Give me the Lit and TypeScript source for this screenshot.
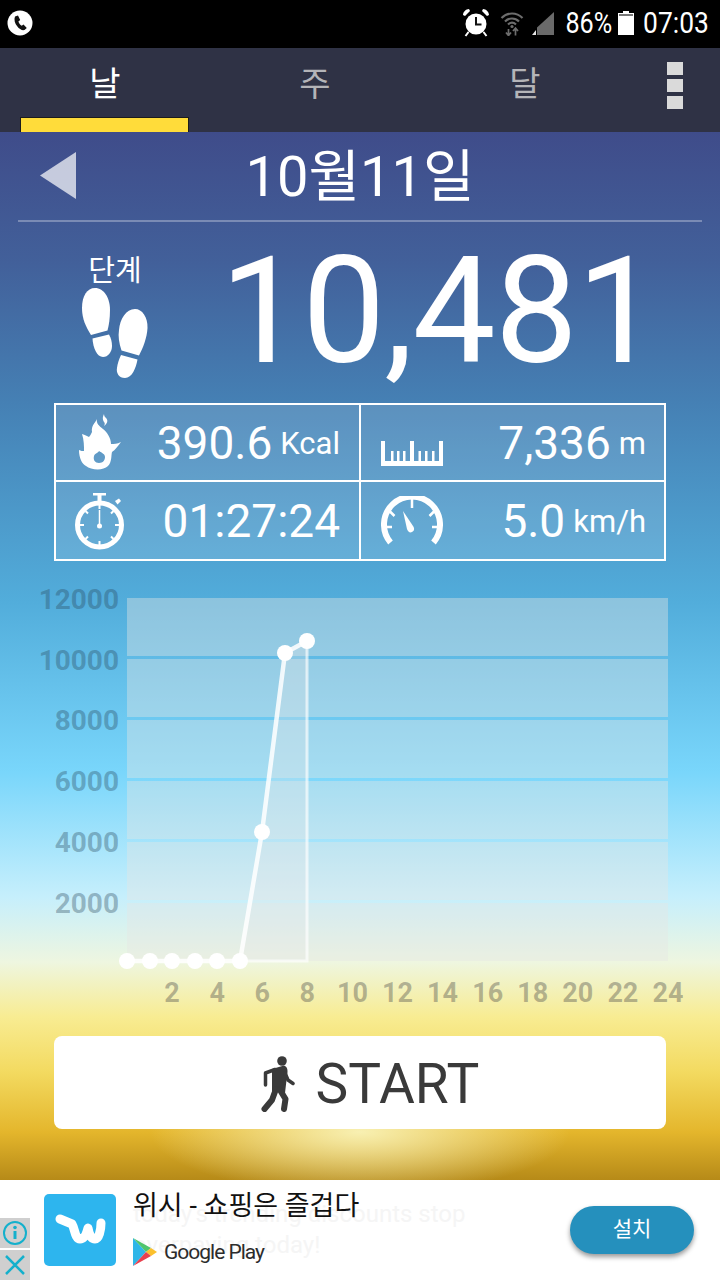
import { html, css, LitElement, svg } from 'lit'
import { customElement, state } from 'lit/decorators.js'

const YLABELS = [
  { text: '12000', y: 599 },
  { text: '10000', y: 660 },
  { text: '8000', y: 720 },
  { text: '6000', y: 781 },
  { text: '4000', y: 842 },
  { text: '2000', y: 903 },
]

// bands of the plot, the gaps between them are the grid lines
const BANDS = [
  [598, 656],
  [659, 717],
  [720, 778],
  [781, 839],
  [842, 900],
  [903, 961],
]

const POINTS = [
  [127, 961],
  [150, 961],
  [172, 961],
  [195, 961],
  [217, 961],
  [240, 961],
  [262, 832],
  [285, 653],
  [307, 641],
]

@customElement('app-root')
export class AppRoot extends LitElement {
  @state()
  steps = '10,481'

  private chart() {
    const line = POINTS.map((p) => p.join(',')).join(' ')
    return html`
      <svg class="chart" viewBox="0 561 720 475" width="720" height="475">
        ${BANDS.map(
          ([a, b]) => svg`<rect x="127" y=${a} width="541" height=${b - a} fill="rgb(230,230,227)" fill-opacity="0.4"></rect>`,
        )}
        ${YLABELS.map(
          (l) => svg`<text class="axis ylab" x="119" y=${l.y + 10}>${l.text}</text>`,
        )}
        ${[2, 4, 6, 8, 10, 12, 14, 16, 18, 20, 22, 24].map(
          (h) => svg`<text class="axis xlab" x=${127 + h * 22.54} y="1002">${h}</text>`,
        )}
        <polygon points="240,961 262,832 285,653 307,641 307,961" fill="#e8e8e8" fill-opacity="0.3"></polygon>
        <polyline points="240,961 307,961 307,641" fill="none" stroke="#fff" stroke-opacity="0.65" stroke-width="3"></polyline>
        <polyline points=${line} fill="none" stroke="#fff" stroke-opacity="0.85" stroke-width="4.5"></polyline>
        ${POINTS.map((p) => svg`<circle cx=${p[0]} cy=${p[1]} r="8" fill="#fff"></circle>`)}
      </svg>
    `
  }

  render() {
    return html`
      <div class="status">
        <svg class="ph" width="26" height="26" viewBox="0 0 26 26">
          <circle cx="13" cy="13" r="12.5" fill="#fff"></circle>
          <path d="M8 6.5l3-1 2.2 4.4-1.8 1.5c.6 1.8 1.7 3.300 3.300 4.400l1.800-1.300 3.300 3.500-2.300 2c-2.500.6-5.200-1-7.300-3.800C7.800 13.300 6.800 9.500 8 6.500z" fill="#111"></path>
        </svg>
        <span class="status-right">
          <svg width="28" height="30" viewBox="0 0 28 30">
            <path d="M1 7c0-3 3-6 6-6l1 2-5 5zM27 7c0-3-3-6-6-6l-1 2 5 5z" fill="#fff"></path>
            <circle cx="14" cy="16" r="10.500" fill="#fff"></circle>
            <path d="M14 9v7.500h5.500" fill="none" stroke="#111" stroke-width="2"></path>
            <path d="M6.500 24l-3 4M21.500 24l3 4" stroke="#fff" stroke-width="2"></path>
          </svg>
          <svg class="wifi" width="24" height="26" viewBox="0 0 24 26">
            <path d="M1.500 8c6-6 15-6 21 0M5 11.500c4-4 10-4 14 0M8 14.500c2.400-2.200 5.600-2.200 8 0" fill="none" stroke="#6d6d6d" stroke-width="2.200"></path>
            <circle cx="12" cy="16.500" r="1.600" fill="#6d6d6d"></circle>
            <path d="M8.500 19v6.500M6 22.500l2.500 3 2.500-3M15.500 25.500V18M13 21l2.500-3 2.500 3" fill="none" stroke="#6d6d6d" stroke-width="1.700"></path>
          </svg>
          <svg class="sig" width="24" height="24" viewBox="0 0 24 24">
            <path d="M6 16.500L23 1v23H6z" fill="#6a6a6a"></path>
            <path d="M1 24l4-5v5z" fill="#e6e6e6"></path>
          </svg>
          <span class="pct">86%</span>
          <svg class="bat" width="16" height="24" viewBox="0 0 16 24">
            <path d="M5 0h6v2h5v22H0V2h5z" fill="#fff"></path>
            <path d="M1 3h14v2H1z" fill="#777"></path>
          </svg>
          <span class="clock">07:03</span>
        </span>
      </div>

      <div class="tabs">
        <div class="tab on">날<i></i></div>
        <div class="tab">주</div>
        <div class="tab">달</div>
        <div class="dots"><b></b><b></b><b></b></div>
      </div>

      <main>
        <div class="head">
          <svg class="back" width="36" height="47" viewBox="0 0 36 47"><path d="M36 0v47L0 23.500z" fill="#fff" fill-opacity="0.7"></path></svg>
          <span class="title">10월11일</span>
        </div>

        <div class="steps">
          <div class="steps-left">
            <span class="label">단계</span>
            <svg width="66" height="90" viewBox="0 0 66 90" fill="#fff">
              <path d="M13 0C22 0 28 10 28 22 28 30 27 37 25.500 42.500L9 47C4 39 0 31 0 20 0 8 5 0 13 0Z"></path>
              <path d="M10.500 50.500L27 46.500C29 50 30 54 30 58 30 64 26 69 21 69 15 69 11 60 10.500 50.500Z"></path>
              <path d="M53 21C60 21 66 29 65.500 40 65 50 61 60 57 67.500L39.500 62.500C37 55 36 48 37 42 38 31 44 21 53 21Z"></path>
              <path d="M39 67L55.500 71.500C54 80 50 90 43 90 37 90 34 85 35 80 35.500 76 37 71 39 67Z"></path>
            </svg>
          </div>
          <span class="count">${this.steps}</span>
        </div>

        <div class="stats">
          <div class="cell top left">
            <span class="ico"><svg width="42" height="57" viewBox="0 0 42 57" fill="#fff">
              <path d="M25 0C23 4 24 6 25 8 26 9 26 10 25 12 29 9 29 6 27 4 26 3 25 2 25 0Z"></path>
              <path fill-rule="evenodd" d="M18 5C16 9 12 12 13 18 12 20 11 22 10 23 8 22 6 21 3 20 5 26 5 32 5 37 3 37 2 37 0 36 0 44 3 50 7 52 12 56 24 57 29 52 33 48 32 42 33 38 36 36 39 32 42 28 38 30 35 30 32 30 32 24 28 18 24 15 20 12 17 9 18 5ZM20 37c-1 2-4 2-5 5-1 4 1 7 5 7 4 0 6-3 6-6 0-3-3-4-6-6z"></path>
            </svg></span>
            <span class="val">390.6<small>Kcal</small></span>
          </div>
          <div class="cell top">
            <span class="ico wide low"><svg width="62" height="25" viewBox="0 0 62 25" fill="#fff">
              <path d="M0 0h4v20h6V10h2.500v10H16V10h2.500v10H22V10h2.500v10H29V0h4v20h4.500V10H40v10h4V10h2.500v10H51V10h2.500v10H58V0h4v25H0z"></path>
            </svg></span>
            <span class="val">7,336<small>m</small></span>
          </div>
          <div class="cell left">
            <span class="ico"><svg width="50" height="58" viewBox="0 0 50 58">
              <path d="M18 1h13v2.500h-4.500V9h-4V3.500H18z" fill="#fff"></path>
              <path d="M40 9l4-2.500 2 2.500-3.500 3.500z" fill="#fff"></path>
              <circle cx="24.500" cy="33" r="22" fill="none" stroke="#fff" stroke-width="5"></circle>
              <path d="M24.500 13v4M24.500 49v4M5 33h4M40 33h4M10.500 19l2.500 2.500M38.500 19L36 21.500M10.500 47l2.500-2.500M38.500 47L36 44.500" stroke="#fff" stroke-width="2"></path>
              <path d="M24.500 18v15" stroke="#fff" stroke-width="1.500"></path>
              <circle cx="24.500" cy="34" r="2.500" fill="#fff"></circle>
            </svg></span>
            <span class="val">01:27:24</span>
          </div>
          <div class="cell">
            <span class="ico wide"><svg width="62" height="50" viewBox="0 0 62 50">
              <path d="M9.500 46.500A28 28 0 1 1 52.500 46.500" fill="none" stroke="#fff" stroke-width="6"></path>
              <path d="M31 3v9M8.500 15l5 5M53.500 15l-5 5M3 31h8M51 31h8" stroke="#fff" stroke-width="2.500"></path>
              <path d="M22 15l10 15c2 3 1 5-1 6-2 1-4 0-5-3z" fill="#fff"></path>
            </svg></span>
            <span class="val">5.0<small>km/h</small></span>
          </div>
        </div>

        ${this.chart()}

        <button class="start">
          <svg width="34" height="56" viewBox="0 0 34 56">
            <circle cx="21" cy="5" r="4.800" fill="#3a3a3a"></circle>
            <path d="M11 13L23 9.500C27 11 27 15 26 20L24 37 11 35Z" fill="#3a3a3a"></path>
            <g fill="none" stroke="#3a3a3a" stroke-linecap="round" stroke-linejoin="round">
              <path d="M14 13.500L4.500 17V29" stroke-width="3.500"></path>
              <path d="M24 17L27 24 32 27.500" stroke-width="3.500"></path>
              <path d="M15 33L11 44 3.500 53" stroke-width="6"></path>
              <path d="M19 34L24.500 43 23 53" stroke-width="6"></path>
            </g>
          </svg>
          <span>START</span>
        </button>
      </main>

      <div class="ad">
        <span class="ghost g1">today's trending discounts stop</span>
        <span class="ghost g2">overpaying today!</span>
        <svg class="wish" width="72" height="72" viewBox="0 0 72 72">
          <rect width="72" height="72" rx="5" fill="#2db5ee"></rect>
          <path d="M16 25l12 5c3 5 3 15 8 15 5 0 7-7 8-11 1 6 3 11 7 11 4 0 6-9 6-16" fill="none" stroke="#fff" stroke-width="9" stroke-linecap="round" stroke-linejoin="round"></path>
        </svg>
        <div class="ad-text">
          <span class="ad-title">위시 - 쇼핑은 즐겁다</span>
          <span class="gp">
            <svg width="24" height="28" viewBox="0 0 24 28">
              <path d="M0 0l13 14L0 28z" fill="#2fb6e8"></path>
              <path d="M0 0l18 10-5 4z" fill="#4fc46c"></path>
              <path d="M18 10l6 4-6 4-5-4z" fill="#fbc02d"></path>
              <path d="M0 28l18-10-5-4z" fill="#e8404f"></path>
            </svg>
            <span>Google Play</span>
          </span>
        </div>
        <span class="install">설치</span>
        <div class="ad-side">
          <span><svg width="26" height="26" viewBox="0 0 26 26">
            <circle cx="13" cy="13" r="11" fill="none" stroke="#14b0cc" stroke-width="2"></circle>
            <path d="M13 11v8" stroke="#14b0cc" stroke-width="3"></path>
            <circle cx="13" cy="7.500" r="1.800" fill="#14b0cc"></circle>
          </svg></span>
          <span><svg width="26" height="26" viewBox="0 0 26 26">
            <path d="M4 4l18 18M22 4L4 22" stroke="#14b0cc" stroke-width="2.500"></path>
          </svg></span>
        </div>
      </div>
    `
  }

  static styles = css`
    :host {
      display: flex;
      flex-direction: column;
      width: 720px;
      height: 1280px;
      overflow: hidden;
      font-family: Roboto, 'Noto Sans CJK KR', sans-serif;
      color: #fff;
    }

    .status {
      height: 48px;
      background: #000;
      display: flex;
      align-items: center;
      justify-content: space-between;
      padding: 0 11px 2px 7px;
      box-sizing: border-box;
      flex: none;
    }

    .status-right {
      display: flex;
      align-items: center;
    }

    .wifi {
      margin-left: 10px;
    }

    .sig {
      margin-left: 7px;
    }

    .pct,
    .clock {
      display: inline-block;
      font-size: 30px;
      line-height: 34px;
      transform: scaleX(0.84);
    }

    .pct {
      margin-left: 6px;
      width: 55px;
      text-align: center;
      margin-right: -4px;
    }

    .clock {
      width: 84px;
      margin-left: -0.5px;
      margin-right: -8.5px;
      text-align: center;
      transform: scaleX(0.88);
    }

    .bat {
      margin-left: 6px;
    }

    .tabs {
      position: relative;
      height: 84px;
      background: #2f3245;
      display: flex;
      padding-left: 0;
      flex: none;
    }

    .tab {
      width: 210px;
      text-align: center;
      font-size: 34px;
      line-height: 72px;
      color: #b4b4b8;
    }

    .tab.on {
      color: #fff;
    }

    .tab i {
      position: absolute;
      left: 20px;
      bottom: 0;
      width: 169px;
      height: 15px;
      background: #ffdc3a;
      box-sizing: border-box;
      border: 1px solid #1c1c1c;
      border-bottom: 0;
    }

    .dots {
      position: absolute;
      right: 37px;
      top: 14px;
      display: grid;
      gap: 4px;
    }

    .dots b {
      display: block;
      width: 16px;
      height: 13px;
      background: #dadada;
    }

    main {
      flex: 1;
      display: flex;
      flex-direction: column;
      background:
        radial-gradient(ellipse 210px 62px at 360px 1000px, rgba(249, 243, 185, 0.95), rgba(249, 243, 185, 0)),
        linear-gradient(
          180deg,
          #3f4c8a 0,
          #42609a 130px,
          #4580b4 270px,
          #52addb 470px,
          #79d6fb 640px,
          #c6effc 765px,
          #eef6e0 830px,
          #f8ec92 885px,
          #f3da60 940px,
          #e4b62c 1000px,
          #b68a18 1048px
        );
    }

    .head {
      position: relative;
      height: 88px;
      margin: 0 18px;
      border-bottom: 2px solid rgba(255, 255, 255, 0.3);
      display: flex;
      align-items: center;
      justify-content: center;
      flex: none;
    }

    .back {
      position: absolute;
      left: 22px;
      top: 20px;
    }

    .title {
      font-size: 56px;
      line-height: 88px;
      padding-top: 2px;
    }

    .steps {
      height: 181px;
      display: flex;
      flex: none;
      box-sizing: border-box;
      padding: 0 61px 0 82px;
      justify-content: space-between;
    }

    .steps-left {
      display: flex;
      flex-direction: column;
      align-items: center;
      padding-top: 32px;
    }

    .label {
      font-size: 29px;
      line-height: 34px;
    }

    .count {
      font-size: 148px;
      line-height: 180px;
      letter-spacing: -1px;
    }

    .stats {
      margin: 0 54px;
      width: 612px;
      height: 158px;
      box-sizing: border-box;
      border: 2px solid #fff;
      background: rgba(255, 255, 255, 0.13);
      display: grid;
      grid-template-columns: 305px 1fr;
      grid-template-rows: 77px 1fr;
      flex: none;
    }

    .cell {
      display: flex;
      align-items: center;
      justify-content: space-between;
      padding: 0 18px 0 18px;
      min-width: 0;
      min-height: 0;
    }

    .cell.top {
      border-bottom: 2px solid #fff;
    }

    .cell.left {
      border-right: 2px solid #fff;
      padding-right: 19px;
    }

    .ico {
      width: 52px;
      display: flex;
      justify-content: center;
      align-items: center;
    }

    .ico.wide {
      width: 62px;
      margin-left: 2px;
    }

    .ico.low {
      padding-top: 21px;
    }

    .val {
      font-size: 46px;
      line-height: 70px;
      display: flex;
      align-items: flex-end;
    }

    .val small {
      font-size: 31px;
      line-height: 31px;
      margin-left: 8px;
      margin-bottom: 19px;
    }

    .chart {
      display: block;
      flex: none;
    }

    .axis {
      font-family: Roboto, sans-serif;
      font-weight: 700;
      font-size: 28px;
    }

    .ylab {
      text-anchor: end;
      fill: rgba(40, 70, 90, 0.36);
    }

    .xlab {
      text-anchor: middle;
      font-size: 27px;
      fill: rgba(70, 70, 70, 0.38);
    }

    .start {
      margin: 0 54px;
      height: 93px;
      border: 0;
      border-radius: 8px;
      background: #fff;
      display: flex;
      align-items: center;
      justify-content: center;
      gap: 21px;
      padding: 3px 0 0 20px;
      font-family: inherit;
      font-size: 55px;
      color: #3a3a3a;
      flex: none;
    }

    .ad {
      position: relative;
      height: 100px;
      background: #fff;
      display: flex;
      flex: none;
      color: #111;
      padding: 14px 26px 0 44px;
      box-sizing: border-box;
    }

    .ghost {
      position: absolute;
      left: 133px;
      font-size: 24px;
      line-height: 30px;
      color: #f5f5f5;
      white-space: nowrap;
    }

    .g1 {
      top: 19px;
    }

    .g2 {
      top: 50px;
    }

    .wish {
      flex: none;
    }

    .ad-text {
      position: relative;
      margin-left: 17px;
      display: flex;
      flex-direction: column;
      flex: 1;
    }

    .ad-title {
      font-size: 27px;
      line-height: 30px;
      margin-top: -3px;
      white-space: nowrap;
    }

    .gp {
      display: flex;
      align-items: center;
      gap: 7px;
      margin-top: 17px;
      font-size: 21px;
      letter-spacing: -1px;
      color: #2c2c2c;
    }

    .install {
      align-self: flex-start;
      margin-top: 12px;
      width: 124px;
      height: 48px;
      border-radius: 24px;
      background: #2590bd;
      color: #fff;
      font-size: 21px;
      line-height: 46px;
      text-align: center;
      box-shadow: 0 3px 5px rgba(0, 0, 0, 0.4);
    }

    .ad-side {
      position: absolute;
      left: 0;
      top: 38px;
      display: grid;
      gap: 2px;
    }

    .ad-side span {
      width: 30px;
      height: 30px;
      background: #cfcfcf;
      display: flex;
      align-items: center;
      justify-content: center;
    }
  `
}

declare global {
  interface HTMLElementTagNameMap {
    'app-root': AppRoot
  }
}
